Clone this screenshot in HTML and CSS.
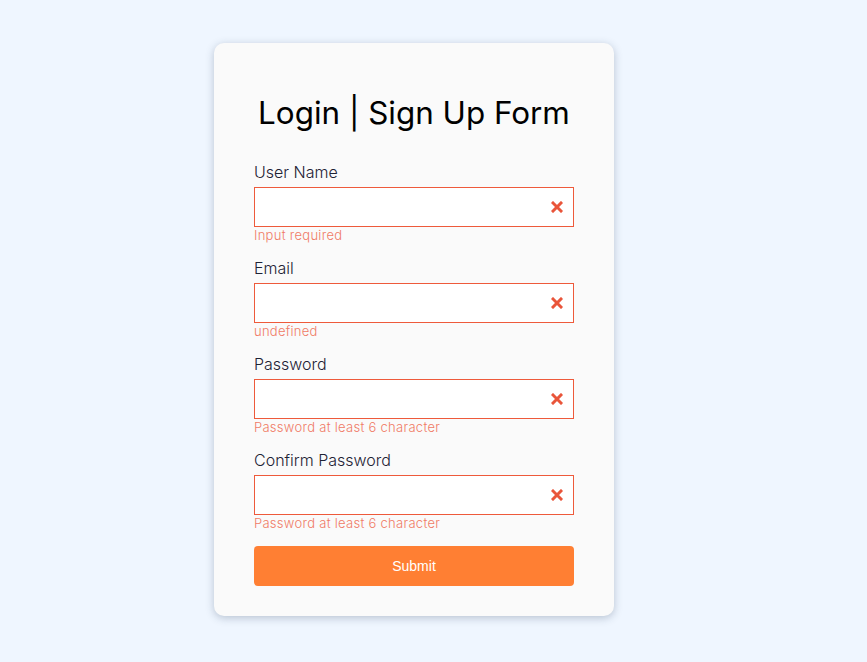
FILE: index.html
```html
<!DOCTYPE html>
<html>
<head>
<meta charset="utf-8">
<link rel="stylesheet" href="styles.css">
</head>
<body>
<div class="page">
  <form class="card">
    <h1 class="title">Login | Sign Up Form</h1>
    <div class="field">
      <label class="label">User Name</label>
      <div class="input-wrap">
        <input class="input" type="text">
        <svg class="x" viewBox="0 0 12 12"><path d="M2 2L10 10M10 2L2 10" stroke="#e9553a" stroke-width="3" stroke-linecap="square"/></svg>
      </div>
      <div class="error">Input required</div>
    </div>
    <div class="field">
      <label class="label">Email</label>
      <div class="input-wrap">
        <input class="input" type="text">
        <svg class="x" viewBox="0 0 12 12"><path d="M2 2L10 10M10 2L2 10" stroke="#e9553a" stroke-width="3" stroke-linecap="square"/></svg>
      </div>
      <div class="error">undefined</div>
    </div>
    <div class="field">
      <label class="label">Password</label>
      <div class="input-wrap">
        <input class="input" type="password">
        <svg class="x" viewBox="0 0 12 12"><path d="M2 2L10 10M10 2L2 10" stroke="#e9553a" stroke-width="3" stroke-linecap="square"/></svg>
      </div>
      <div class="error">Password at least 6 character</div>
    </div>
    <div class="field">
      <label class="label">Confirm Password</label>
      <div class="input-wrap">
        <input class="input" type="password">
        <svg class="x" viewBox="0 0 12 12"><path d="M2 2L10 10M10 2L2 10" stroke="#e9553a" stroke-width="3" stroke-linecap="square"/></svg>
      </div>
      <div class="error">Password at least 6 character</div>
    </div>
    <button class="submit" type="button">Submit</button>
  </form>
</div>
</body>
</html>
```

FILE: styles.css
```css
html, body {
  margin: 0;
  padding: 0;
}
body {
  background: #eff6ff;
  font-family: Inter, "Noto Sans", sans-serif;
  height: 662px;
}
.page {
  display: flex;
  padding-top: 43px;
  padding-left: 214px;
}
.card {
  width: 400px;
  box-sizing: border-box;
  background: #fafafa;
  border-radius: 10px;
  box-shadow: 0 2px 8px rgba(40, 60, 90, 0.28);
  padding: 50px 40px 30px 40px;
  display: flex;
  flex-direction: column;
}
.title {
  margin: 0 0 27px 0;
  font-size: 31.4px;
  font-weight: 400;
  line-height: 40px;
  text-align: center;
  color: #000;
}
.field {
  display: flex;
  flex-direction: column;
  margin-bottom: 12px;
}
.label {
  font-size: 16px;
  font-weight: 300;
  line-height: 24px;
  color: #1e2235;
  margin-bottom: 3px;
}
.input-wrap {
  position: relative;
  height: 40px;
}
.input {
  width: 100%;
  height: 40px;
  box-sizing: border-box;
  border: 1px solid #ee5a3b;
  background: #fff;
  outline: none;
  margin: 0;
  padding: 0 30px 0 10px;
  font-family: inherit;
  font-size: 14px;
}
.x {
  position: absolute;
  right: 11px;
  top: 14px;
  width: 12px;
  height: 12px;
}
.error {
  font-size: 13px;
  font-weight: 300;
  letter-spacing: 0.28px;
  line-height: 17px;
  color: #f07a66;
}
.submit {
  margin-top: 2px;
  height: 40px;
  border: none;
  border-radius: 4px;
  background: #ff7f33;
  color: #fff;
  font-family: "Liberation Sans", Arial, sans-serif;
  font-size: 14px;
  cursor: pointer;
}
```
